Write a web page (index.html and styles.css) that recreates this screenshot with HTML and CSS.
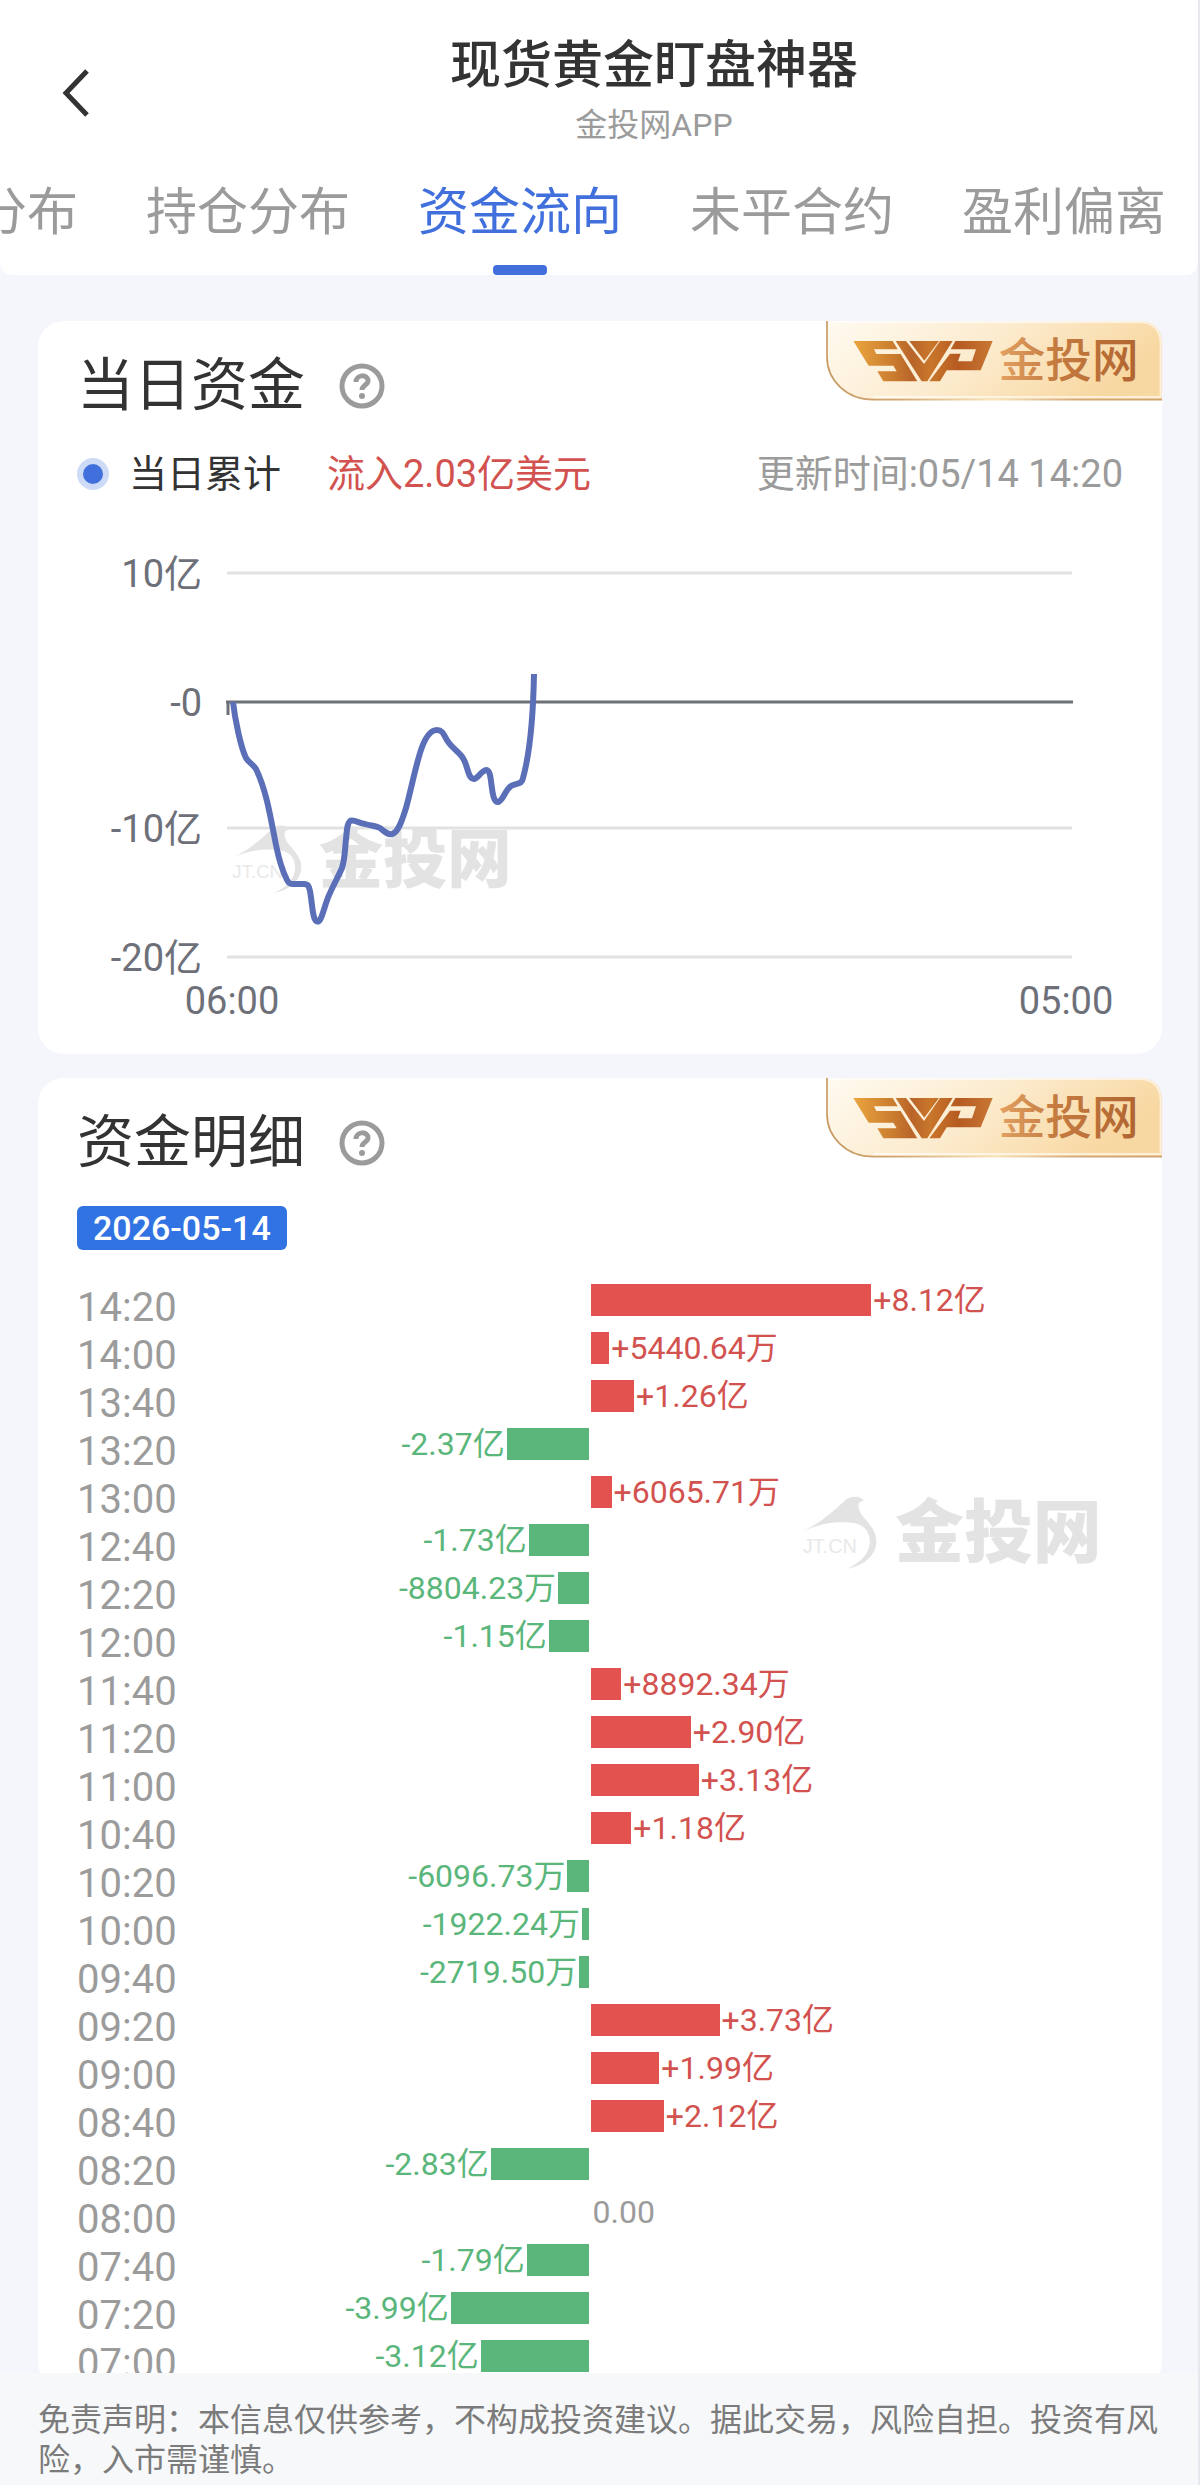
FILE: index.html
```html
<!DOCTYPE html>
<html lang="zh-CN">

<head>
	<meta charset="UTF-8">
	<meta name="viewport" content="width=device-width, initial-scale=1.0">
	<title>现货黄金盯盘神器</title>
	<link rel="stylesheet" href="styles.css">
</head>

<body>

	<!-- Shared drawings -->
	<svg class="defs" aria-hidden="true">
		<defs>
			<linearGradient id="badge-bg" x1="0" y1="0" x2="1" y2="0.3">
				<stop offset="0" stop-color="#fffaf0"/>
				<stop offset="0.5" stop-color="#fcecd0"/>
				<stop offset="1" stop-color="#f8d8a2"/>
			</linearGradient>
			<linearGradient id="badge-line" gradientUnits="userSpaceOnUse" x1="78" y1="0" x2="1086" y2="0">
				<stop offset="0" stop-color="#c79a62"/>
				<stop offset="0.2" stop-color="#d0a470"/>
				<stop offset="0.5" stop-color="#f8e6bd"/>
				<stop offset="0.75" stop-color="#d2a779"/>
				<stop offset="1" stop-color="#cfa170"/>
			</linearGradient>
			<linearGradient id="gold-logo" gradientUnits="userSpaceOnUse" x1="160" y1="0" x2="580" y2="0">
				<stop offset="0" stop-color="#eba53f"/>
				<stop offset="0.3" stop-color="#c87a2e"/>
				<stop offset="0.42" stop-color="#b9642a"/>
				<stop offset="0.55" stop-color="#c9772b"/>
				<stop offset="0.75" stop-color="#b65a22"/>
				<stop offset="1" stop-color="#c97835"/>
			</linearGradient>
			<linearGradient id="gold-text" gradientUnits="userSpaceOnUse" x1="600" y1="0" x2="1015" y2="0">
				<stop offset="0" stop-color="#e2a062"/>
				<stop offset="0.4" stop-color="#c47b40"/>
				<stop offset="1" stop-color="#b16430"/>
			</linearGradient>
		</defs>
		<symbol id="svp" viewBox="78 62 1008 240">
			<path fill="url(#badge-bg)" d="M80 62H1016Q1086 62 1086 132V298H220C140 298 80 240 80 170Z"/>
			<path fill="none" stroke="url(#badge-line)" stroke-width="5" d="M81 62V170C81 240 140 298 220 298H1086"/>
			<path fill="none" stroke="#fff" stroke-opacity="0.6" stroke-width="6" d="M84 65H1016Q1082 65 1082 132V290H220"/>
			<g fill="url(#gold-logo)">
				<path d="M160 122H278L293 147H222L229 161H302L352 243H250L232 213H290L280 196H206Z"/>
				<path d="M287 122H318L372 191L420 122H458L382 243H365Z"/>
				<path d="M328 122H417L373 181Z"/>
				<path d="M466 122H578L542 210H440L420 243H388L450 160H482L474 183H516L528 147H452Z"/>
			</g>
			<text class="svp-text" x="596" y="230">金投网</text>
		</symbol>
		<symbol id="watermark" viewBox="50 72 914 228">
			<path fill="#e3e3e3" d="M55 187C110 165 150 130 190 92C208 76 232 76 248 90C240 96 232 95 232 108C233 140 270 155 283 195C296 240 262 285 198 297C245 275 268 245 266 210C262 165 225 155 180 157C130 157 90 172 55 187Z"/>
			<text class="mark-en" x="64" y="250">JT.CN</text>
			<text class="mark-cn" x="342" y="261">金投网</text>
		</symbol>
		<symbol id="help" viewBox="0 0 46 46">
			<circle cx="23" cy="23" r="20" fill="none" stroke="#9b9b9b" stroke-width="5"/>
			<path fill="none" stroke="#9b9b9b" stroke-width="5" d="M17 19C17 11 29 11 29 18C29 22 23 22 23 27"/>
			<circle cx="23" cy="33" r="3" fill="#9b9b9b"/>
		</symbol>
	</svg>

	<div class="page">
		<header class="header">
			<div class="topbar">
				<button class="back-btn" aria-label="返回">
					<svg width="32" height="52" viewBox="0 0 32 52"><path d="M27 4L6 26L27 48" fill="none" stroke="#333" stroke-width="5"/></svg>
				</button>
				<div class="titles">
					<h1 class="title">现货黄金盯盘神器</h1>
					<p class="subtitle">金投网APP</p>
				</div>
			</div>
			<nav class="tabs">
				<a class="tab" href="#">分布</a>
				<a class="tab" href="#">持仓分布</a>
				<a class="tab active" href="#">资金流向</a>
				<a class="tab" href="#">未平合约</a>
				<a class="tab" href="#">盈利偏离</a>
			</nav>
		</header>

		<main class="content">
			<!-- Today's funds -->
			<section class="card">
				<svg class="badge"><use href="#svp"/></svg>
				<div class="card-head">
					<h2 class="card-title">当日资金</h2>
					<button class="help-btn" aria-label="说明"><svg width="46" height="46"><use href="#help"/></svg></button>
				</div>
				<div class="legend">
					<span class="dot"></span>
					<span class="legend-name">当日累计</span>
					<span class="legend-value">流入2.03亿美元</span>
					<span class="update">更新时间:05/14 14:20</span>
				</div>
				<svg class="chart" viewBox="0 1 1124 523">
					<g stroke="#e1e1e1" stroke-width="3">
						<path d="M189 43H1034M189 298H1034M189 427H1034"/>
					</g>
					<use href="#watermark" x="190" y="293" width="284" height="71"/>
					<path fill="none" stroke="#6e7079" stroke-width="3" d="M188 172H1035M190 172V185"/>
					<path fill="none" stroke="#5b6fb9" stroke-width="6" stroke-linejoin="round" d="M195 172C197 190 203 218 208 228C211 233 215 234 218 239C224 251 227 263 229 271C233 288 235 300 238 315C241 330 245 342 249 350Q251 354 254 354H266C270 354 271 356 272 361C274 372 274 380 276 387C278 393 281 393 283 388C286 381 288 371 292 363C296 354 300 347 304 338C307 329 307 318 308 309C309 300 309 294 312 291C315 289 321 293 327 294C333 296 337 295 342 298C347 302 350 305 354 304C361 302 365 287 368 278C373 260 376 243 382 223C386 210 391 200 399 200C406 200 406 207 411 213C416 220 423 223 426 230C430 237 430 249 436 249C441 248 443 240 449 240C455 242 452 272 460 272C465 271 467 260 473 256C478 253 484 255 485 248C490 230 495 195 496 144"/>
					<g class="axis" text-anchor="end">
						<text x="164" y="57">10亿</text>
						<text x="164" y="186">-0</text>
						<text x="164" y="312">-10亿</text>
						<text x="164" y="441">-20亿</text>
					</g>
					<g class="axis" text-anchor="middle">
						<text x="194" y="484">06:00</text>
						<text x="1028" y="484">05:00</text>
					</g>
				</svg>
			</section>

			<!-- Funds detail -->
			<section class="card">
				<svg class="badge"><use href="#svp"/></svg>
				<div class="card-head">
					<h2 class="card-title">资金明细</h2>
					<button class="help-btn" aria-label="说明"><svg width="46" height="46"><use href="#help"/></svg></button>
				</div>
				<span class="date">2026-05-14</span>
				<svg class="mark"><use href="#watermark"/></svg>
				<ul class="rows" id="rows"></ul>
			</section>
		</main>

		<footer class="footer">免责声明：本信息仅供参考，不构成投资建议。据此交易，风险自担。投资有风险，入市需谨慎。</footer>
	</div>

	<script src="script.js"></script>
</body>

</html>
```
FILE: styles.css
```css
*
{
	box-sizing: border-box;
}

body
{
	margin: 0;
	font-family: Roboto, "Noto Sans CJK SC", sans-serif;
	color: #333;
	background-color: #f5f6fc;
}

h1,
h2,
p,
ul
{
	margin: 0;
	padding: 0;
	font-weight: 400;
	list-style: none;
}

button
{
	padding: 0;
	border: none;
	background: none;
	cursor: pointer;
}

svg
{
	display: block;
}

.defs
{
	position: absolute;
	width: 0;
	height: 0;
}

.page
{
	display: flex;
	flex-direction: column;
	height: 100vh;
	border-right: 2px solid #e6e8ee;
}

/* Header */
.header
{
	flex: none;
	padding-top: 34px;
	background-color: #fff;
	border-radius: 0 0 12px 12px;
}

.topbar
{
	display: flex;
	align-items: center;
}

.back-btn
{
	display: flex;
	justify-content: flex-end;
	width: 92px;
	margin-right: 18px;
}

.titles
{
	flex: 1;
	text-align: center;
}

.title
{
	font-size: 51px;
	line-height: 64px;
	font-weight: 500;
}

.subtitle
{
	font-size: 32px;
	line-height: 54px;
	color: #9b9b9b;
}

.tabs
{
	display: flex;
	gap: 68px;
	margin-top: 29px;
	overflow: hidden;
}

.tab
{
	display: flex;
	flex: none;
	flex-direction: column;
	align-items: center;
	height: 94px;
	font-size: 51px;
	line-height: 64px;
	color: #9b9b9b;
	text-decoration: none;
}

.tab:first-child
{
	margin-left: -24px;
}

.tab.active
{
	color: #4170dc;
}

.tab.active::after
{
	content: "";
	width: 54px;
	height: 10px;
	margin-top: auto;
	border-radius: 4px;
	background-color: #4170dc;
}

/* Cards */
.content
{
	display: flex;
	flex: 1;
	flex-direction: column;
	gap: 24px;
	min-height: 0;
	padding: 46px 36px 0 38px;
	overflow-y: auto;
	scrollbar-width: none;
}

.card
{
	position: relative;
	flex: none;
	padding-top: 32px;
	border-radius: 26px;
	background-color: #fff;
}

.badge
{
	position: absolute;
	top: 0;
	right: 0;
	width: 336px;
	height: 80px;
}

.svp-text
{
	font-size: 140px;
	font-weight: 500;
	fill: url(#gold-text);
}

.card-head
{
	display: flex;
	align-items: center;
	gap: 34px;
	padding-left: 39px;
}

.card-title
{
	font-size: 57px;
	line-height: 66px;
}

.legend
{
	display: flex;
	align-items: center;
	margin-top: 30px;
	padding: 0 39px;
	font-size: 38px;
	line-height: 50px;
}

.dot
{
	width: 32px;
	height: 32px;
	border: 6px solid #cddbf6;
	border-radius: 50%;
	background-color: #4170dc;
}

.legend-name
{
	margin-left: 20px;
}

.legend-value
{
	margin-left: 46px;
	color: #d2524f;
}

.update
{
	margin-left: auto;
	color: #9b9b9b;
}

.chart
{
	width: 100%;
	margin-top: 32px;
}

.axis
{
	font-size: 38px;
	fill: #6e7079;
}

.mark
{
	position: absolute;
	top: 416px;
	right: 60px;
	width: 304px;
	height: 76px;
}

.mark-cn
{
	font-size: 207px;
	font-weight: 900;
	fill: #e3e3e3;
}

.mark-en
{
	font-family: "Liberation Sans", Arial, sans-serif;
	font-size: 60px;
	fill: #e9e9e9;
}

/* Detail rows */
.date
{
	display: inline-block;
	margin: 30px 0 0 39px;
	padding: 0 16px;
	border-radius: 6px;
	font-size: 34px;
	line-height: 44px;
	font-weight: 500;
	color: #fff;
	background-color: #3273e3;
	vertical-align: top;
}

.rows
{
	margin-top: 34px;
	padding: 0 39px;
}

.row
{
	display: grid;
	grid-template-columns: 49fr 51fr;
	gap: 2px;
	height: 48px;
}

.side
{
	display: flex;
	min-width: 0;
}

.time
{
	margin-right: auto;
	font-size: 40px;
	line-height: 48px;
	color: #9b9b9b;
}

.value
{
	padding: 0 2px;
	font-size: 32px;
	line-height: 32px;
	color: #9b9b9b;
}

.bar
{
	flex: none;
	height: 32px;
}

.out .value
{
	color: #5ab67a;
}

.out .bar
{
	background-color: #5ab67a;
}

.in .value
{
	color: #d2524f;
}

.in .bar
{
	background-color: #e3524f;
}

/* Disclaimer */
.footer
{
	flex: none;
	padding: 27px 36px 5px 38px;
	font-size: 32px;
	line-height: 40px;
	color: #7b7b7b;
	background-color: #f7f8fa;
}
```
FILE: script.js
```javascript
// time, amount in 亿, label
var rows = [
	["14:20", 8.12, "+8.12亿"],
	["14:00", 0.544064, "+5440.64万"],
	["13:40", 1.26, "+1.26亿"],
	["13:20", -2.37, "-2.37亿"],
	["13:00", 0.606571, "+6065.71万"],
	["12:40", -1.73, "-1.73亿"],
	["12:20", -0.880423, "-8804.23万"],
	["12:00", -1.15, "-1.15亿"],
	["11:40", 0.889234, "+8892.34万"],
	["11:20", 2.90, "+2.90亿"],
	["11:00", 3.13, "+3.13亿"],
	["10:40", 1.18, "+1.18亿"],
	["10:20", -0.609673, "-6096.73万"],
	["10:00", -0.192224, "-1922.24万"],
	["09:40", -0.271950, "-2719.50万"],
	["09:20", 3.73, "+3.73亿"],
	["09:00", 1.99, "+1.99亿"],
	["08:40", 2.12, "+2.12亿"],
	["08:20", -2.83, "-2.83亿"],
	["08:00", 0, "0.00"],
	["07:40", -1.79, "-1.79亿"],
	["07:20", -3.99, "-3.99亿"],
	["07:00", -3.12, "-3.12亿"]
];

// Amount that would fill each side of the axis
var maxOut = 14.8;
var maxIn = 15.4;

var html = "";
rows.forEach(function (row)
{
	var amount = row[1];
	var value = '<span class="value">' + row[2] + '</span>';
	var max = amount < 0 ? maxOut : maxIn;
	var bar = '<span class="bar" style="width: ' + (Math.abs(amount) / max * 100).toFixed(2) + '%"></span>';

	html += '<li class="row">';
	html += '<div class="side out"><span class="time">' + row[0] + '</span>' + (amount < 0 ? value + bar : '') + '</div>';
	html += '<div class="side' + (amount > 0 ? ' in' : '') + '">' + (amount >= 0 ? bar + value : '') + '</div>';
	html += '</li>';
});
document.getElementById("rows").innerHTML = html;
```
